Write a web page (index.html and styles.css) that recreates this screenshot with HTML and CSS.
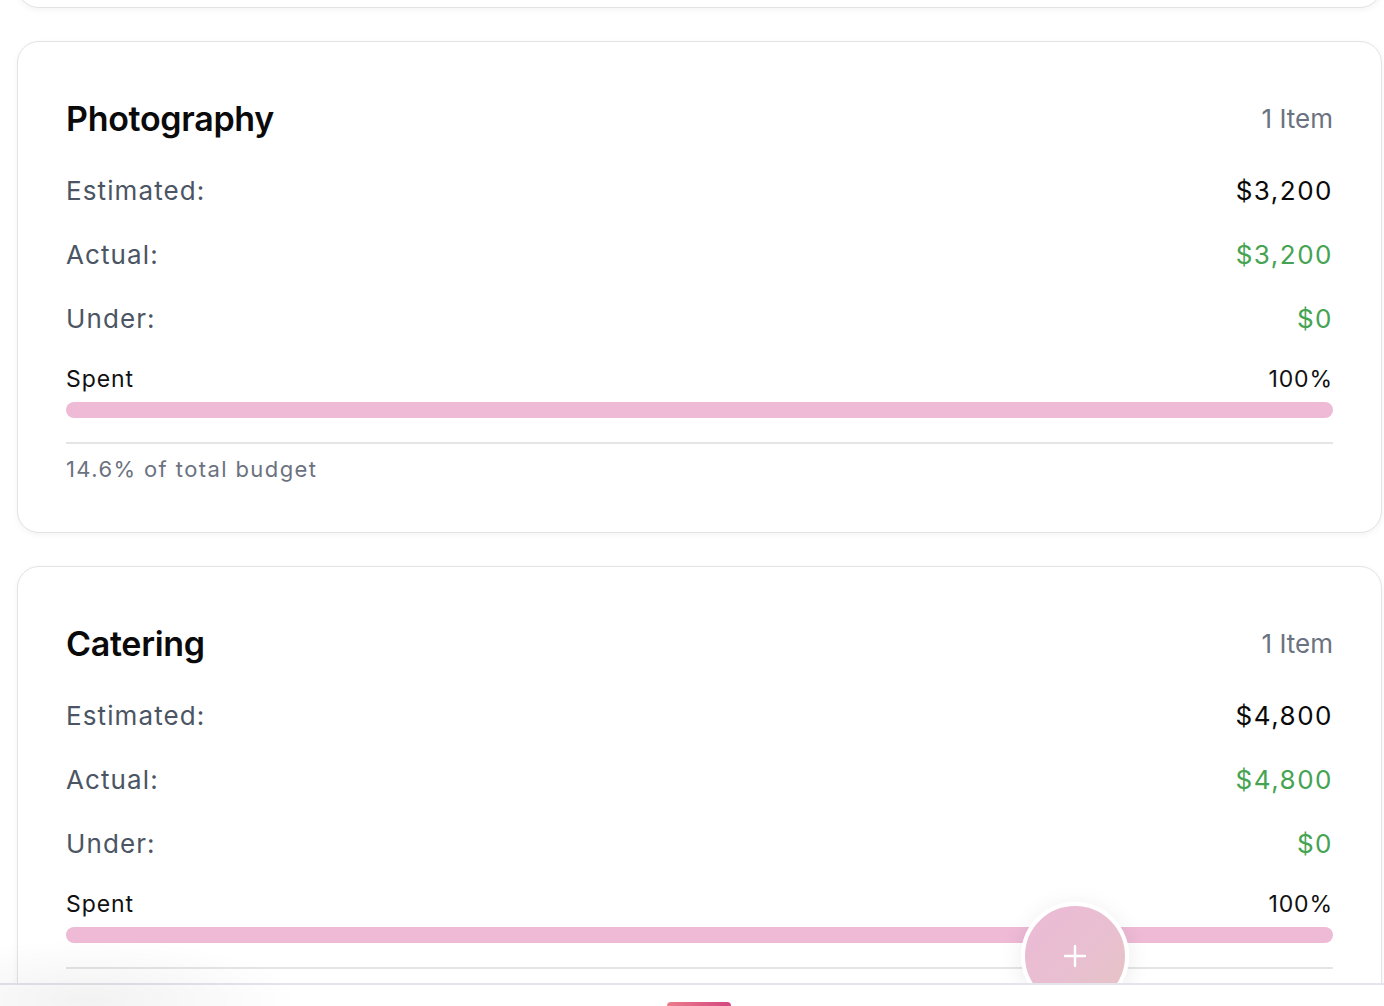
FILE: index.html
```html
<!DOCTYPE html>
<html lang="en">
<head>
<meta charset="utf-8">
<title>Budget Categories</title>
<link rel="stylesheet" href="styles.css">
</head>
<body>
<main class="page">
  <section class="card card-stub"></section>

  <section class="card">
    <header class="card-head">
      <h2 class="card-title">Photography</h2>
      <span class="card-count">1 Item</span>
    </header>
    <div class="row"><span class="row-label">Estimated:</span><span class="row-value">$3,200</span></div>
    <div class="row"><span class="row-label">Actual:</span><span class="row-value green">$3,200</span></div>
    <div class="row"><span class="row-label">Under:</span><span class="row-value green">$0</span></div>
    <div class="spent-line"><span>Spent</span><span>100%</span></div>
    <div class="bar"><div class="bar-fill" style="width:100%"></div></div>
    <div class="card-foot">14.6% of total budget</div>
  </section>

  <section class="card">
    <header class="card-head">
      <h2 class="card-title">Catering</h2>
      <span class="card-count">1 Item</span>
    </header>
    <div class="row"><span class="row-label">Estimated:</span><span class="row-value">$4,800</span></div>
    <div class="row"><span class="row-label">Actual:</span><span class="row-value green">$4,800</span></div>
    <div class="row"><span class="row-label">Under:</span><span class="row-value green">$0</span></div>
    <div class="spent-line"><span>Spent</span><span>100%</span></div>
    <div class="bar"><div class="bar-fill" style="width:100%"></div></div>
    <div class="card-foot">21.9% of total budget</div>
  </section>
</main>

<button class="fab" aria-label="Add">
  <svg width="26" height="26" viewBox="0 0 26 26"><path d="M13 3v20M3 13h20" stroke="#fff" stroke-width="2.4" stroke-linecap="round" fill="none"/></svg>
</button>

<nav class="tabbar">
  <div class="tab-active"></div>
</nav>
<div class="corner-shade"></div>
</body>
</html>
```

FILE: styles.css
```css
* { box-sizing: border-box; }
html, body { margin: 0; padding: 0; }
body {
  background: #ffffff;
  font-family: Inter, "Noto Sans", "Liberation Sans", sans-serif;
  color: #111;
  height: 1006px;
  overflow: hidden;
}
.page {
  display: flex;
  flex-direction: column;
  gap: 33px;
  padding: 0 2px 0 17px;
  margin-top: -93px;
  height: 1099px;
  overflow: hidden;
}
.card {
  background: #fff;
  border: 1.5px solid #e3e3e3;
  border-radius: 22px;
  box-shadow: 0 2px 6px rgba(0, 0, 0, 0.05);
  padding: 56px 48px 48px 48px;
  flex-shrink: 0;
}
.card-stub { height: 101px; padding: 0; }
.card-head {
  display: flex;
  justify-content: space-between;
  align-items: center;
  height: 40px;
  margin-bottom: 20px;
}
.card-title {
  margin: 0;
  font-size: 34px;
  font-weight: 600;
  letter-spacing: -0.3px;
  color: #0a0a0a;
}
.card-count {
  font-size: 26px;
  color: #6b7280;
  letter-spacing: 0;
}
.row {
  display: flex;
  justify-content: space-between;
  align-items: center;
  height: 64px;
  font-size: 26px;
}
.row-label { color: #4b5563; letter-spacing: 1.1px; }
.row-value { color: #0a0a0a; letter-spacing: 1.5px; }
.row-value.green { color: #45a352; }
.spent-line {
  display: flex;
  justify-content: space-between;
  align-items: center;
  height: 30px;
  margin-top: 14px;
  font-size: 23px;
  color: #111;
  letter-spacing: 0.9px;
}
.bar {
  margin-top: 8px;
  height: 16px;
  border-radius: 8px;
  background: #f3dbe7;
  overflow: hidden;
}
.bar-fill {
  height: 100%;
  border-radius: 8px;
  background: #eebad6;
}
.card-foot {
  margin-top: 24px;
  border-top: 2px solid #e5e5e5;
  padding-top: 10px;
  height: 42px;
  line-height: 30px;
  font-size: 22px;
  color: #6b7280;
  letter-spacing: 1.4px;
}
.fab {
  position: fixed;
  left: 1021px;
  top: 902px;
  width: 108px;
  height: 108px;
  border-radius: 50%;
  border: 4px solid #fff;
  background: linear-gradient(135deg, #ecbad6 0%, #e8bfd0 55%, #e5c4c3 100%);
  box-shadow: 0 4px 24px rgba(0, 0, 0, 0.08);
  display: flex;
  align-items: center;
  justify-content: center;
  padding: 0;
  z-index: 5;
}
.tabbar {
  position: fixed;
  left: 0;
  right: 0;
  top: 983px;
  height: 23px;
  background: #fff;
  border-top: 2px solid #e4e4ea;
  z-index: 10;
  overflow: hidden;
}
.tab-active {
  position: absolute;
  left: 667px;
  top: 17px;
  width: 64px;
  height: 20px;
  border-radius: 4px 4px 0 0;
  background: linear-gradient(90deg, #eb7d8c 0%, #d3467f 100%);
}
.corner-shade {
  position: fixed;
  left: -120px;
  top: 940px;
  width: 420px;
  height: 66px;
  background: radial-gradient(ellipse 210px 60px at 50% 90%, rgba(0,0,0,0.05) 0%, rgba(0,0,0,0) 100%);
  z-index: 11;
  pointer-events: none;
}
```
